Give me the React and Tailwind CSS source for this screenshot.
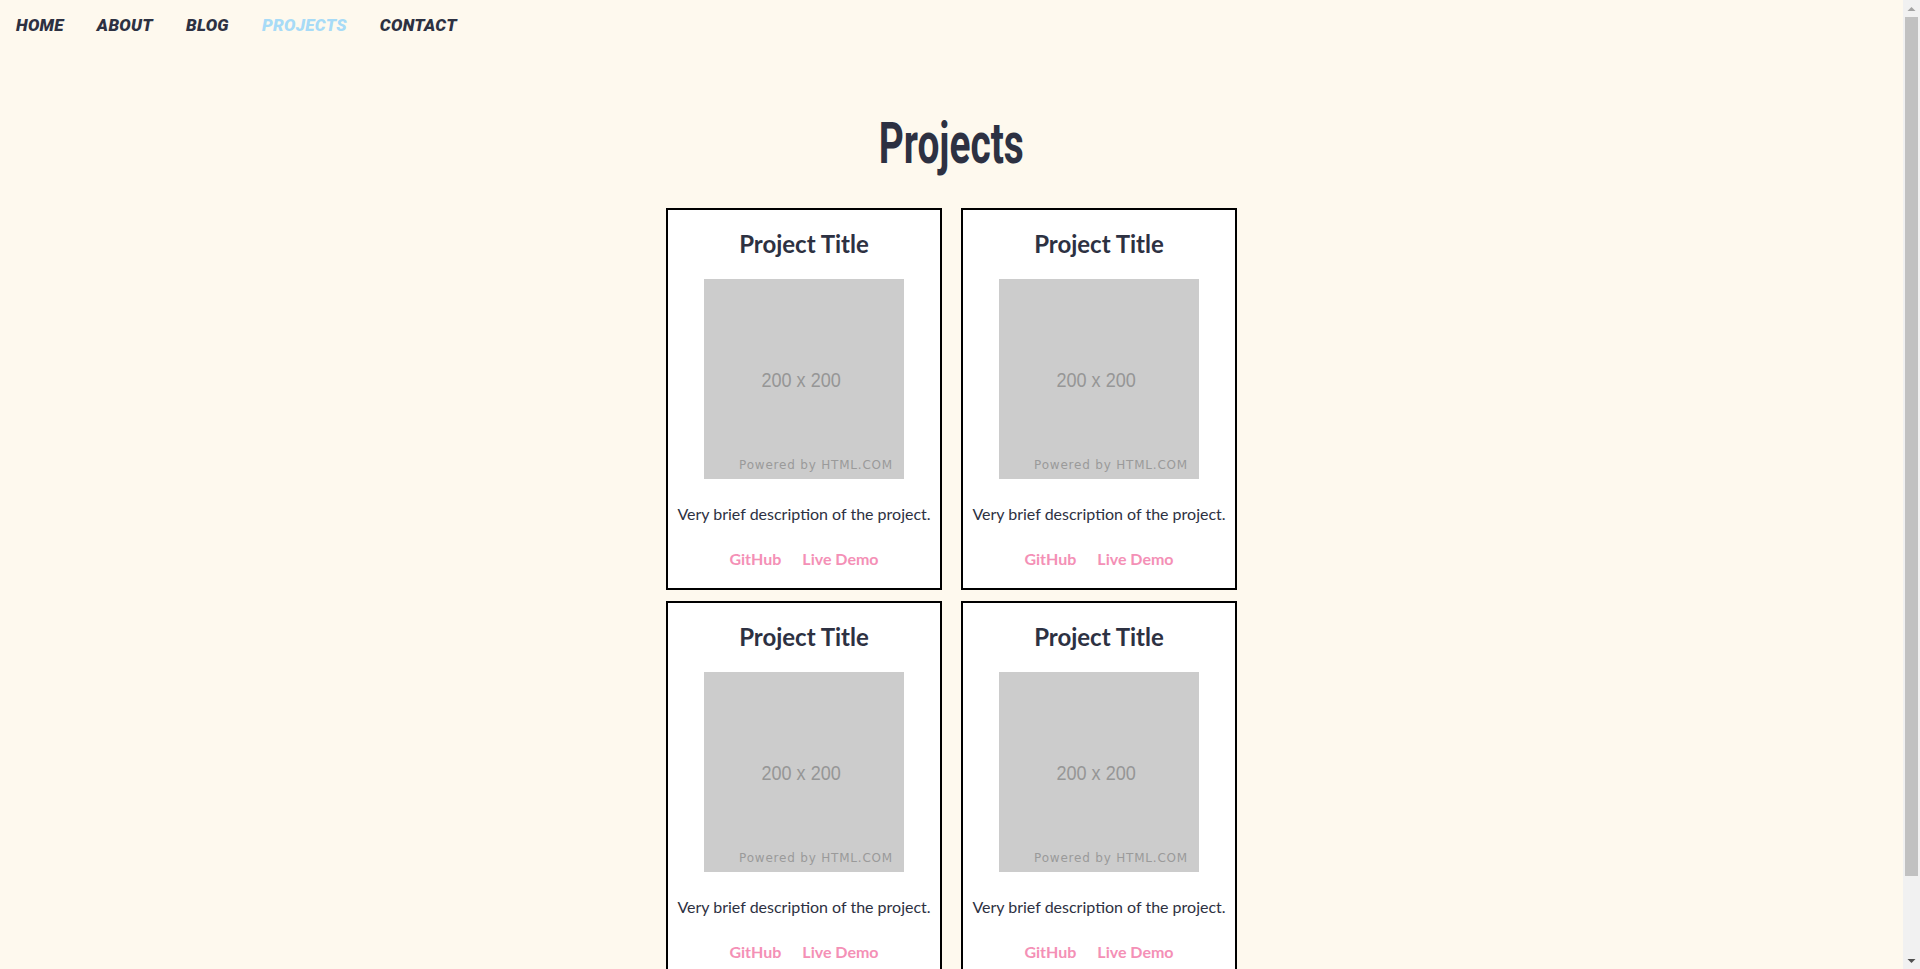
import React from "react";

const links = ["HOME", "ABOUT", "BLOG", "PROJECTS", "CONTACT"];

function Placeholder() {
  return (
    <div className="relative w-[200px] h-[200px] bg-[#cccccc] mx-auto">
      <div className="absolute inset-0 flex items-center justify-center pr-[6px] pt-[2px] text-[21px] text-[#969696] font-['Liberation_Sans',Arial,sans-serif]">
        <span className="inline-block scale-x-[0.86]">200 x 200</span>
      </div>
      <div className="absolute right-[11px] bottom-[7px] text-[12px] leading-[14px] tracking-[0.8px] text-[#9a9a9a] font-['DejaVu_Sans',Verdana,sans-serif]">
        Powered by HTML.COM
      </div>
    </div>
  );
}

function Card() {
  return (
    <div className="w-[276px] border-2 border-black bg-white flex flex-col items-center pt-[19px] pb-[19px] font-['Lato',sans-serif]">
      <h2 className="text-[24px] leading-[29px] font-bold text-[#2d3142]">Project Title</h2>
      <div className="mt-[21px]">
        <Placeholder />
      </div>
      <p className="mt-[25px] text-[16px] leading-[20px] text-[#2d3142]">
        Very brief description of the project.
      </p>
      <div className="mt-[25px] flex gap-[21px] text-[16px] leading-[20px] font-bold text-[#f490b6]">
        <a href="#">GitHub</a>
        <a href="#">Live Demo</a>
      </div>
    </div>
  );
}

function Scrollbar() {
  return (
    <div className="w-[17px] h-full bg-[#f1f1f1] flex flex-col shrink-0">
      <div className="h-[17px] flex items-center justify-center">
        <svg width="9" height="6" viewBox="0 0 9 6">
          <path d="M0.5 5 L4.5 1 L8.5 5 Z" fill="#a3a3a3" />
        </svg>
      </div>
      <div className="flex-1 px-[2px]">
        <div className="h-[859px] bg-[#c1c1c1]" />
      </div>
      <div className="h-[17px] flex items-center justify-center">
        <svg width="9" height="6" viewBox="0 0 9 6">
          <path d="M0.5 1 L4.5 5 L8.5 1 Z" fill="#505050" />
        </svg>
      </div>
    </div>
  );
}

export default function App() {
  return (
    <div className="h-screen overflow-hidden flex bg-[#fef9ee]">
      <div className="flex-1 overflow-hidden">
        <div className="pb-[71px]">
          <nav className="h-[52px] flex items-center pl-[16px] gap-[33px] font-['Roboto',sans-serif] italic font-black text-[17px] tracking-[0.3px]">
            {links.map((l) => (
              <a
                key={l}
                href="#"
                className={l === "PROJECTS" ? "text-[#a7dbf7]" : "text-[#2d3142]"}
              >
                {l}
              </a>
            ))}
          </nav>
          <main className="flex flex-col items-center">
            <h1 className="mt-[62px] h-[58px] text-[58px] leading-none font-bold text-[#2d3142] font-['Roboto',sans-serif] flex justify-center">
              <span className="inline-block scale-x-[0.67]">Projects</span>
            </h1>
            <div className="mt-[36px] grid grid-cols-[276px_276px] gap-x-[19px] gap-y-[11px]">
              <Card />
              <Card />
              <Card />
              <Card />
            </div>
          </main>
        </div>
      </div>
      <Scrollbar />
    </div>
  );
}
